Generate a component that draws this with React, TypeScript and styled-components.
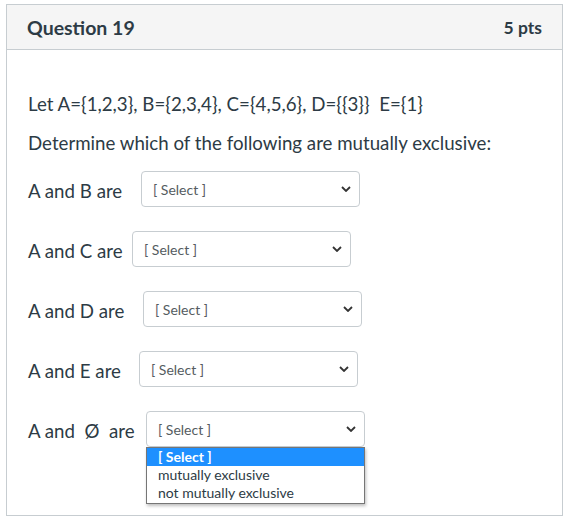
import React from "react";
import styled, { createGlobalStyle } from "styled-components";

const Global = createGlobalStyle`
  html, body { margin: 0; padding: 0; background: #ffffff; }
  body { font-family: Lato, "Noto Sans", sans-serif; color: #2d3b45; }
`;

const Card = styled.div`
  position: relative;
  box-sizing: border-box;
  width: 557px;
  height: 512px;
  margin: 4px 0 0 6px;
  border: 1px solid #c7cdd1;
  background: #fff;
`;

const Header = styled.div`
  box-sizing: border-box;
  height: 45px;
  display: flex;
  align-items: center;
  justify-content: space-between;
  padding: 0 20px;
  background: #f5f5f5;
  border-bottom: 1px solid #c7cdd1;
  font-weight: 700;
  font-size: 19.5px;
`;

const Pts = styled.span`
  font-size: 17.5px;
  color: #2d3b45;
`;

const Body = styled.div`
  padding: 42px 20px 0 21px;
`;

const Para = styled.p<{ $gap: number }>`
  margin: 0 0 ${(p) => p.$gap}px 0;
  font-size: 18.7px;
  line-height: 24px;
  white-space: nowrap;
`;

const Row = styled.div`
  position: relative;
  display: flex;
  align-items: center;
  height: 36px;
  margin-bottom: 24px;
`;

const Label = styled.span<{ $w: number }>`
  width: ${(p) => p.$w}px;
  flex: none;
  font-size: 18.7px;
  padding-top: 4px;
  white-space: pre;
`;

const SelectBox = styled.div`
  box-sizing: border-box;
  width: 219px;
  height: 36px;
  border: 1px solid #c7cdd1;
  border-radius: 4px;
  display: flex;
  align-items: center;
  justify-content: space-between;
  padding: 0 8px 0 11px;
  font-size: 14px;
  color: #555c61;
  background: #fff;
`;

const Chevron = styled.svg`
  width: 10px;
  height: 6px;
  flex: none;
`;

const Menu = styled.div`
  position: absolute;
  top: 36px;
  box-sizing: border-box;
  width: 219px;
  border: 1px solid #767676;
  background: #fff;
  box-shadow: 1px 2px 3px rgba(0, 0, 0, 0.25);
  padding: 0 0 1px 0;
  z-index: 2;
`;

const Option = styled.div<{ $active?: boolean }>`
  height: 18px;
  line-height: 18px;
  padding-left: 11px;
  font-size: 14px;
  font-weight: ${(p) => (p.$active ? 700 : 400)};
  color: ${(p) => (p.$active ? "#ffffff" : "#2d3b45")};
  background: ${(p) => (p.$active ? "#1e90ff" : "transparent")};
`;

const ChevronIcon = () => (
  <Chevron viewBox="0 0 10 6">
    <path d="M1 1 L5 5 L9 1" fill="none" stroke="#333" strokeWidth="1.8" />
  </Chevron>
);

const Select = ({ open, left }: { open?: boolean; left: number }) => (
  <>
    <SelectBox>
      <span>[ Select ]</span>
      <ChevronIcon />
    </SelectBox>
    {open && (
      <Menu style={{ left }}>
        <Option $active>[ Select ]</Option>
        <Option>mutually exclusive</Option>
        <Option>not mutually exclusive</Option>
      </Menu>
    )}
  </>
);

const rows = [
  { label: "A and B are", w: 113 },
  { label: "A and C are", w: 104 },
  { label: "A and D are", w: 115 },
  { label: "A and E are", w: 111 },
  { label: "A and  \u00d8  are", w: 118, open: true },
];

export default function App() {
  return (
    <>
      <Global />
      <Card>
        <Header>
          <span>Question 19</span>
          <Pts>5 pts</Pts>
        </Header>
        <Body>
          <Para $gap={15}>
            Let A={"{"}1,2,3{"}"}, B={"{"}2,3,4{"}"}, C={"{"}4,5,6{"}"}, D={"{{"}3{"}}"}&nbsp; E={"{"}1{"}"}
          </Para>
          <Para $gap={16}>Determine which of the following are mutually exclusive:</Para>
          {rows.map((r) => (
            <Row key={r.label}>
              <Label $w={r.w}>{r.label}</Label>
              <Select open={r.open} left={r.w} />
            </Row>
          ))}
        </Body>
      </Card>
    </>
  );
}
